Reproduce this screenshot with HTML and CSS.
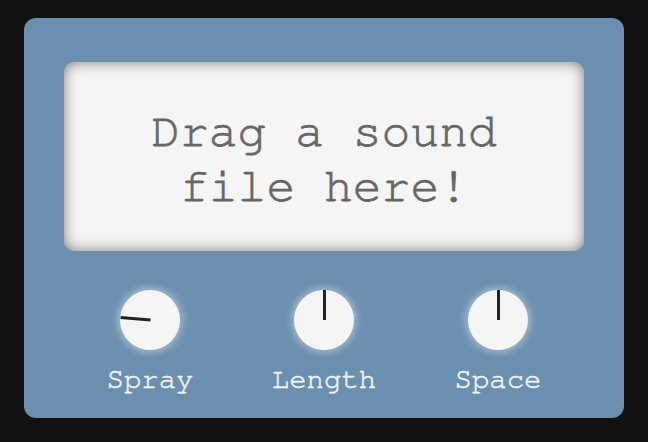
FILE: index.html
```html
<!DOCTYPE html>
<html>
<head>
<meta charset="utf-8">
<link rel="stylesheet" href="styles.css">
</head>
<body>
<div class="panel">
  <div class="display">
    <p class="message">Drag a sound<br>file here!</p>
  </div>
  <div class="knobs">
    <div class="control">
      <div class="knob"><div class="pointer" style="transform: rotate(-85deg)"></div></div>
      <div class="label">Spray</div>
    </div>
    <div class="control">
      <div class="knob"><div class="pointer" style="transform: rotate(0deg)"></div></div>
      <div class="label">Length</div>
    </div>
    <div class="control">
      <div class="knob"><div class="pointer" style="transform: rotate(0deg)"></div></div>
      <div class="label">Space</div>
    </div>
  </div>
</div>
</body>
</html>
```
FILE: styles.css
```css
html, body {
  margin: 0;
  padding: 0;
  background: #121212;
}
body {
  width: 648px;
  height: 442px;
  padding-top: 18px;
  box-sizing: border-box;
  font-family: "FreeMono", "Courier New", monospace;
}
.panel {
  width: 600px;
  height: 400px;
  margin: 0 auto;
  background: #6b8fae;
  border-radius: 12px;
  padding: 44px 40px 0;
  box-sizing: border-box;
}
.display {
  height: 189px;
  background: #f5f5f5;
  border-radius: 10px;
  box-shadow: inset 0 0 14px rgba(0, 0, 0, 0.5);
  display: flex;
  align-items: center;
  justify-content: center;
}
.message {
  margin: 0;
  font-size: 48px;
  line-height: 55px;
  color: #666666;
  -webkit-text-stroke: 0.8px #666666;
  text-align: center;
  padding-top: 6px;
}
.knobs {
  display: grid;
  grid-template-columns: repeat(3, 174px);
  justify-content: center;
  margin-top: 39px;
}
.control {
  display: flex;
  flex-direction: column;
  align-items: center;
}
.knob {
  width: 60px;
  height: 60px;
  border-radius: 50%;
  background: #f5f5f5;
  box-shadow: 0 0 8px 2px rgba(255, 255, 255, 0.45);
  position: relative;
}
.pointer {
  position: absolute;
  left: 28.5px;
  top: 0;
  width: 3px;
  height: 30px;
  background: #222222;
  transform-origin: 50% 100%;
}
.label {
  margin-top: 14px;
  font-size: 29px;
  line-height: 32px;
  color: #f5f5f5;
  -webkit-text-stroke: 0.5px #f5f5f5;
}
```
